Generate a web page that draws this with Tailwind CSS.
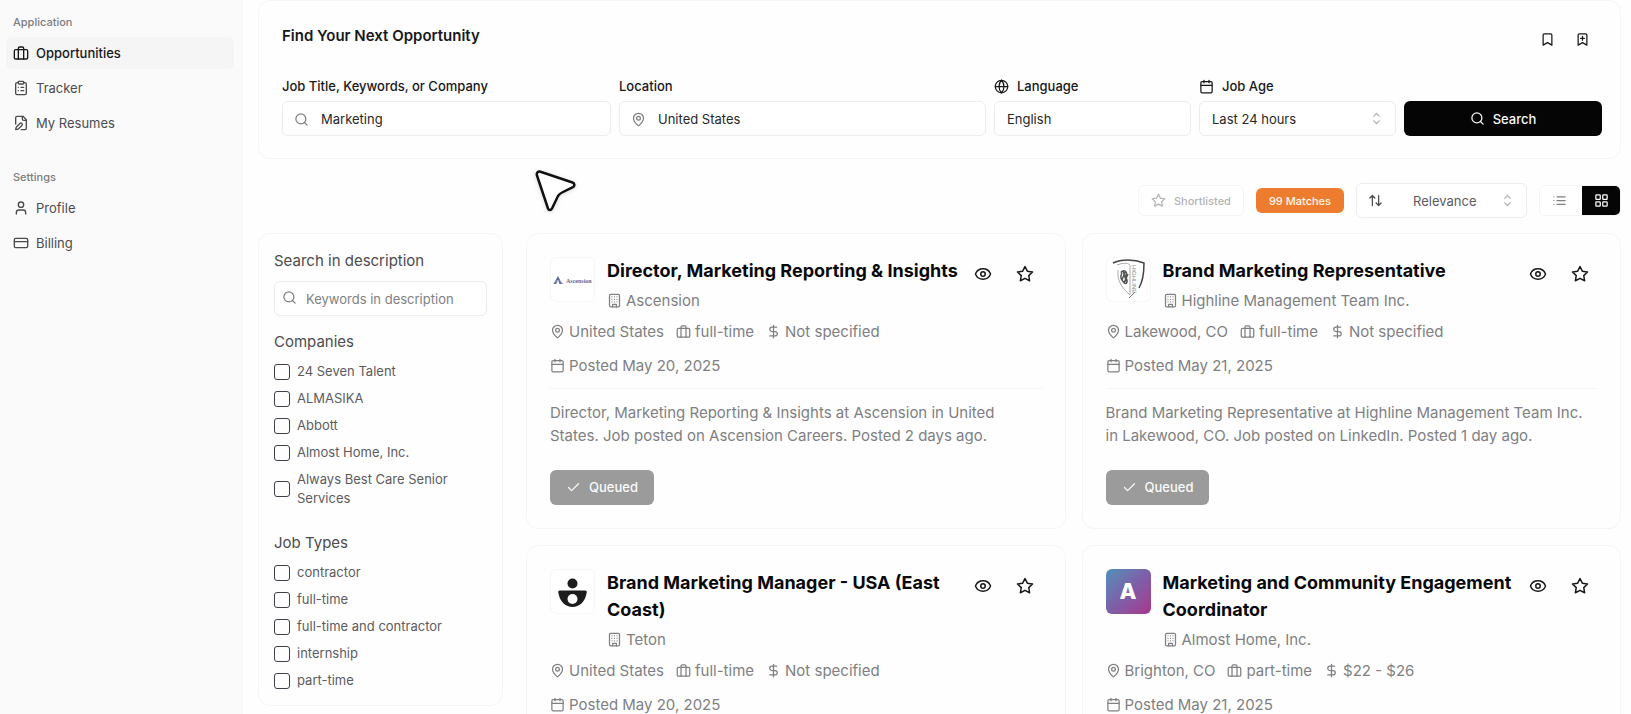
<!DOCTYPE html>
<html lang="en">
<head>
    <meta charset="UTF-8">
    <meta name="viewport" content="width=device-width, initial-scale=1.0">
    <title>Opportunities</title>
    <script src="https://cdn.jsdelivr.net/npm/@tailwindcss/browser@4"></script>
</head>
<body class="bg-[#fefefe] text-zinc-900 font-['Inter',sans-serif] text-[13px]/5">
    <!-- Icon sprite -->
    <svg class="hidden" xmlns="http://www.w3.org/2000/svg">
        <symbol id="i-briefcase" viewBox="0 0 24 24"><rect x="2" y="7" width="20" height="14" rx="2"/><path d="M16 21V5a2 2 0 0 0-2-2h-4a2 2 0 0 0-2 2v16"/></symbol>
        <symbol id="i-clipboard" viewBox="0 0 24 24"><rect x="8" y="2" width="8" height="4" rx="1"/><path d="M16 4h2a2 2 0 0 1 2 2v14a2 2 0 0 1-2 2H6a2 2 0 0 1-2-2V6a2 2 0 0 1 2-2h2M12 11h4M12 16h4M8 11h.01M8 16h.01"/></symbol>
        <symbol id="i-file-pen" viewBox="0 0 24 24"><path d="M12.5 22H18a2 2 0 0 0 2-2V7l-5-5H6a2 2 0 0 0-2 2v9.5"/><path d="M14 2v4a2 2 0 0 0 2 2h4"/><path d="M13.378 15.626a1 1 0 1 0-3.004-3.004l-5.01 5.012a2 2 0 0 0-.506.854l-.837 2.87a.5.5 0 0 0 .62.62l2.87-.837a2 2 0 0 0 .854-.506z"/></symbol>
        <symbol id="i-user" viewBox="0 0 24 24"><path d="M19 21v-2a4 4 0 0 0-4-4H9a4 4 0 0 0-4 4v2"/><circle cx="12" cy="7" r="4"/></symbol>
        <symbol id="i-card" viewBox="0 0 24 24"><rect x="2" y="5" width="20" height="14" rx="2"/><path d="M2 10h20"/></symbol>
        <symbol id="i-search" viewBox="0 0 24 24"><circle cx="11" cy="11" r="8"/><path d="m21 21-4.3-4.3"/></symbol>
        <symbol id="i-pin" viewBox="0 0 24 24"><path d="M20 10c0 4.993-5.539 10.193-7.399 11.799a1 1 0 0 1-1.202 0C9.539 20.193 4 14.993 4 10a8 8 0 0 1 16 0"/><circle cx="12" cy="10" r="3"/></symbol>
        <symbol id="i-globe" viewBox="0 0 24 24"><circle cx="12" cy="12" r="10"/><path d="M12 2a14.5 14.5 0 0 0 0 20 14.5 14.5 0 0 0 0-20M2 12h20"/></symbol>
        <symbol id="i-calendar" viewBox="0 0 24 24"><path d="M8 2v4M16 2v4M3 10h18"/><rect x="3" y="4" width="18" height="18" rx="2"/></symbol>
        <symbol id="i-chevrons" viewBox="0 0 24 24"><path d="m7 15 5 5 5-5M7 9l5-5 5 5"/></symbol>
        <symbol id="i-bookmark" viewBox="0 0 24 24"><path d="m19 21-7-4-7 4V5a2 2 0 0 1 2-2h10a2 2 0 0 1 2 2v16z"/></symbol>
        <symbol id="i-bookmark-plus" viewBox="0 0 24 24"><path d="m19 21-7-4-7 4V5a2 2 0 0 1 2-2h10a2 2 0 0 1 2 2v16zM12 7v6M15 10H9"/></symbol>
        <symbol id="i-star" viewBox="0 0 24 24"><path d="M12 2l3.09 6.26L22 9.27l-5 4.87 1.18 6.88L12 17.77l-6.18 3.25L7 14.14 2 9.27l6.91-1.01z"/></symbol>
        <symbol id="i-sort" viewBox="0 0 24 24"><path d="m21 16-4 4-4-4M17 20V4M3 8l4-4 4 4M7 4v16"/></symbol>
        <symbol id="i-list" viewBox="0 0 24 24"><path d="M8 6h13M8 12h13M8 18h13M3 6h.01M3 12h.01M3 18h.01"/></symbol>
        <symbol id="i-grid" viewBox="0 0 24 24"><rect x="3" y="3" width="7" height="7" rx="1"/><rect x="14" y="3" width="7" height="7" rx="1"/><rect x="14" y="14" width="7" height="7" rx="1"/><rect x="3" y="14" width="7" height="7" rx="1"/></symbol>
        <symbol id="i-building" viewBox="0 0 24 24"><rect x="4" y="2" width="16" height="20" rx="2"/><path d="M9 22v-4h6v4M8 6h.01M16 6h.01M12 6h.01M12 10h.01M12 14h.01M16 10h.01M16 14h.01M8 10h.01M8 14h.01"/></symbol>
        <symbol id="i-dollar" viewBox="0 0 24 24"><path d="M12 2v20M17 5H9.500a3.500 3.500 0 0 0 0 7h5a3.500 3.500 0 0 1 0 7H6"/></symbol>
        <symbol id="i-eye" viewBox="0 0 24 24"><path d="M2.062 12.348a1 1 0 0 1 0-.696 10.750 10.750 0 0 1 19.876 0 1 1 0 0 1 0 .696 10.750 10.750 0 0 1-19.876 0"/><circle cx="12" cy="12" r="3"/></symbol>
        <symbol id="i-check" viewBox="0 0 24 24"><path d="M20 6 9 17l-5-5"/></symbol>
    </svg>

    <div class="flex h-screen overflow-hidden">
        <!-- Sidebar -->
        <aside class="w-[243px] shrink-0 bg-[#fafafa] border-r border-[#f7f7f7] pl-1.5 pr-2 pt-[7px] text-[#4c4c4f]">
            <h2 class="h-[30px] px-[7px] flex items-center text-[11px] font-medium text-[#7d7d80]">Application</h2>
            <nav class="flex flex-col gap-[3px]">
                <a href="#" class="h-8 px-[7px] flex items-center gap-[7px] rounded-md bg-[#f5f5f5] font-medium text-zinc-900"><svg class="size-4 fill-none stroke-current stroke-2 [stroke-linecap:round] [stroke-linejoin:round]"><use href="#i-briefcase"/></svg>Opportunities</a>
                <a href="#" class="h-8 px-[7px] flex items-center gap-[7px] rounded-md"><svg class="size-4 fill-none stroke-current stroke-2 [stroke-linecap:round] [stroke-linejoin:round]"><use href="#i-clipboard"/></svg>Tracker</a>
                <a href="#" class="h-8 px-[7px] flex items-center gap-[7px] rounded-md"><svg class="size-4 fill-none stroke-current stroke-2 [stroke-linecap:round] [stroke-linejoin:round]"><use href="#i-file-pen"/></svg>My Resumes</a>
            </nav>
            <h2 class="mt-[23px] h-[30px] px-[7px] flex items-center text-[11px] font-medium text-[#7d7d80]">Settings</h2>
            <nav class="flex flex-col gap-[3px]">
                <a href="#" class="h-8 px-[7px] flex items-center gap-[7px] rounded-md"><svg class="size-4 fill-none stroke-current stroke-2 [stroke-linecap:round] [stroke-linejoin:round]"><use href="#i-user"/></svg>Profile</a>
                <a href="#" class="h-8 px-[7px] flex items-center gap-[7px] rounded-md"><svg class="size-4 fill-none stroke-current stroke-2 [stroke-linecap:round] [stroke-linejoin:round]"><use href="#i-card"/></svg>Billing</a>
            </nav>
        </aside>

        <main class="flex-1 min-w-0 pl-[15px] pr-2.5">
            <!-- Search form -->
            <form class="rounded-xl border border-[#f5f5f5] pl-[23px] pr-[18px] pt-[23px] pb-[22px]">
                <div class="flex items-center justify-between h-[30px] pr-3">
                    <h1 class="text-[15px] font-semibold mb-1.5">Find Your Next Opportunity</h1>
                    <div class="flex gap-5">
                        <button type="button" aria-label="Saved searches"><svg class="size-[15px] fill-none stroke-current stroke-2 [stroke-linecap:round] [stroke-linejoin:round]"><use href="#i-bookmark"/></svg></button>
                        <button type="button" aria-label="Save search"><svg class="size-[15px] fill-none stroke-current stroke-2 [stroke-linecap:round] [stroke-linejoin:round]"><use href="#i-bookmark-plus"/></svg></button>
                    </div>
                </div>
                <div class="mt-[22px] grid grid-cols-[329fr_367fr_197fr_197fr_198fr] gap-2 items-end">
                    <div>
                        <label for="keywords" class="flex items-center h-5 mb-[5px] font-medium">Job Title, Keywords, or Company</label>
                        <div class="relative">
                            <svg class="absolute left-3 top-[11px] size-[15px] text-[#808083] fill-none stroke-current stroke-2 [stroke-linecap:round] [stroke-linejoin:round]"><use href="#i-search"/></svg>
                            <input id="keywords" type="text" value="Marketing" class="w-full h-[35px] pl-[38px] pr-3 rounded-md border border-[#ececed] bg-white text-zinc-800">
                        </div>
                    </div>
                    <div>
                        <label for="location" class="flex items-center h-5 mb-[5px] font-medium">Location</label>
                        <div class="relative">
                            <svg class="absolute left-3 top-[11px] size-[15px] text-[#808083] fill-none stroke-current stroke-2 [stroke-linecap:round] [stroke-linejoin:round]"><use href="#i-pin"/></svg>
                            <input id="location" type="text" value="United States" class="w-full h-[35px] pl-[38px] pr-3 rounded-md border border-[#ececed] bg-white text-zinc-800">
                        </div>
                    </div>
                    <div>
                        <label for="language" class="flex items-center gap-2 h-5 mb-[5px] font-medium"><svg class="size-[15px] fill-none stroke-current stroke-2 [stroke-linecap:round] [stroke-linejoin:round]"><use href="#i-globe"/></svg>Language</label>
                        <input id="language" type="text" value="English" class="w-full h-[35px] px-3 rounded-md border border-[#ececed] bg-white text-zinc-800">
                    </div>
                    <div>
                        <label for="age" class="flex items-center gap-2 h-5 mb-[5px] font-medium"><svg class="size-[15px] fill-none stroke-current stroke-2 [stroke-linecap:round] [stroke-linejoin:round]"><use href="#i-calendar"/></svg>Job Age</label>
                        <div class="relative">
                            <select id="age" class="appearance-none w-full h-[35px] px-3 rounded-md border border-[#ececed] bg-white text-zinc-800"><option>Last 24 hours</option></select>
                            <svg class="absolute right-3 top-2.5 size-[15px] text-[#b4b4b6] fill-none stroke-current stroke-2 pointer-events-none"><use href="#i-chevrons"/></svg>
                        </div>
                    </div>
                    <button type="submit" class="h-[35px] rounded-md bg-[#050505] text-zinc-50 font-medium flex items-center justify-center gap-2"><svg class="size-[15px] fill-none stroke-current stroke-2 [stroke-linecap:round] [stroke-linejoin:round]"><use href="#i-search"/></svg>Search</button>
                </div>
            </form>

            <!-- Results toolbar -->
            <div class="mt-6 h-[35px] flex items-center justify-end">
                <button class="h-[31px] px-3 rounded-md border border-[#f4f4f5] bg-white text-[11px] font-medium text-[#b4b4b6] flex items-center gap-2"><svg class="size-[15px] fill-none stroke-current stroke-2 [stroke-linejoin:round]"><use href="#i-star"/></svg>Shortlisted</button>
                <span class="ml-3 h-[25px] px-[13px] rounded-md bg-[#ee7c2e] text-[11px] font-medium text-orange-50 flex items-center">99 Matches</span>
                <div class="ml-3 relative">
                    <svg class="absolute left-3 top-2.5 size-[15px] text-[#4c4c4f] fill-none stroke-current stroke-2 [stroke-linecap:round] [stroke-linejoin:round] pointer-events-none"><use href="#i-sort"/></svg>
                    <select aria-label="Sort by" class="appearance-none w-[171px] h-[35px] pl-14 rounded-md border border-[#ececed] bg-white text-[#5c5c5f]"><option>Relevance</option></select>
                    <svg class="absolute right-3 top-2.5 size-[15px] text-[#b4b4b6] fill-none stroke-current stroke-2 pointer-events-none"><use href="#i-chevrons"/></svg>
                </div>
                <div class="ml-3 h-[31px] flex rounded-md border border-[#f4f4f5] bg-white overflow-hidden">
                    <button aria-label="List view" class="w-[42px] flex items-center justify-center pr-1 text-[#808083]"><svg class="size-[15px] fill-none stroke-current stroke-2 [stroke-linecap:round] [stroke-linejoin:round]"><use href="#i-list"/></svg></button>
                    <button aria-label="Grid view" class="w-[38px] flex items-center justify-center bg-[#050505] text-white"><svg class="size-[15px] fill-none stroke-current stroke-2 [stroke-linecap:round] [stroke-linejoin:round]"><use href="#i-grid"/></svg></button>
                </div>
            </div>

            <div class="mt-[15px] flex items-start gap-[23px]">
                <!-- Filters -->
                <aside class="w-[245px] shrink-0 rounded-xl border border-[#f5f5f5] p-[15px] text-[#5c5c5f]">
                    <label for="desc" class="block text-[15px]/6 text-[#4c4c4f]">Search in description</label>
                    <div class="relative mt-2">
                        <svg class="absolute left-2 top-[9px] size-[15px] text-[#808083] fill-none stroke-current stroke-2 [stroke-linecap:round] [stroke-linejoin:round]"><use href="#i-search"/></svg>
                        <input id="desc" type="text" placeholder="Keywords in description" class="block w-full h-[35px] pl-[31px] pr-3 rounded-md border border-[#ececed] bg-white placeholder:text-[#808083]">
                    </div>
                    <fieldset class="mt-3.5">
                        <legend class="text-[15px]/6 text-[#4c4c4f]">Companies</legend>
                        <div class="mt-2 flex flex-col gap-2 leading-[19px]">
                            <label class="flex items-center gap-[7px]"><input type="checkbox" class="appearance-none size-4 shrink-0 rounded-[3px] border border-zinc-700">24 Seven Talent</label>
                            <label class="flex items-center gap-[7px]"><input type="checkbox" class="appearance-none size-4 shrink-0 rounded-[3px] border border-zinc-700">ALMASIKA</label>
                            <label class="flex items-center gap-[7px]"><input type="checkbox" class="appearance-none size-4 shrink-0 rounded-[3px] border border-zinc-700">Abbott</label>
                            <label class="flex items-center gap-[7px]"><input type="checkbox" class="appearance-none size-4 shrink-0 rounded-[3px] border border-zinc-700">Almost Home, Inc.</label>
                            <label class="flex items-center gap-[7px]"><input type="checkbox" class="appearance-none size-4 shrink-0 rounded-[3px] border border-zinc-700">Always Best Care Senior Services</label>
                        </div>
                    </fieldset>
                    <fieldset class="mt-[23px]">
                        <legend class="text-[15px]/6 text-[#4c4c4f]">Job Types</legend>
                        <div class="mt-2 flex flex-col gap-2 leading-[19px]">
                            <label class="flex items-center gap-[7px]"><input type="checkbox" class="appearance-none size-4 shrink-0 rounded-[3px] border border-zinc-700">contractor</label>
                            <label class="flex items-center gap-[7px]"><input type="checkbox" class="appearance-none size-4 shrink-0 rounded-[3px] border border-zinc-700">full-time</label>
                            <label class="flex items-center gap-[7px]"><input type="checkbox" class="appearance-none size-4 shrink-0 rounded-[3px] border border-zinc-700">full-time and contractor</label>
                            <label class="flex items-center gap-[7px]"><input type="checkbox" class="appearance-none size-4 shrink-0 rounded-[3px] border border-zinc-700">internship</label>
                            <label class="flex items-center gap-[7px]"><input type="checkbox" class="appearance-none size-4 shrink-0 rounded-[3px] border border-zinc-700">part-time</label>
                        </div>
                    </fieldset>
                </aside>

                <!-- Job cards -->
                <div class="flex-1 min-w-0 grid grid-cols-2 gap-4 text-[15px]/[23px] text-[#808083]">
                    <article class="rounded-xl border border-[#f5f5f5] p-[23px]">
                        <div class="flex">
                            <div class="size-[45px] shrink-0 rounded-md border border-[#f7f7f7] bg-white">
                                <svg viewBox="0 0 43 43" class="size-full"><path d="M7 18 11 26H8.500L7 22 5 26H2.500z" fill="#5d6799"/><path d="M3 25c3-4 6-3 9 1" fill="none" stroke="#9aa6cc"/><text x="15" y="25" font-size="6" font-weight="700" font-family="Liberation Serif, serif" fill="#5d6799">Ascension</text></svg>
                            </div>
                            <div class="ml-3 flex-1 min-w-0">
                                <h3 class="text-[18px]/[27px] font-bold text-zinc-950">Director, Marketing Reporting &amp; Insights</h3>
                                <p class="mt-[5px] flex items-center gap-1"><svg class="size-[15px] fill-none stroke-current stroke-2 [stroke-linecap:round] [stroke-linejoin:round]"><use href="#i-building"/></svg>Ascension</p>
                            </div>
                            <div class="flex gap-6 pt-2 pr-2 ml-1 h-fit text-zinc-900">
                                <button aria-label="View job"><svg class="size-[18px] fill-none stroke-current stroke-2 [stroke-linecap:round] [stroke-linejoin:round]"><use href="#i-eye"/></svg></button>
                                <button aria-label="Shortlist job"><svg class="size-[18px] fill-none stroke-current stroke-2 [stroke-linejoin:round]"><use href="#i-star"/></svg></button>
                            </div>
                        </div>
                        <div class="mt-2 flex flex-wrap gap-x-3 gap-y-[11px]">
                            <span class="flex items-center gap-1"><svg class="size-[15px] fill-none stroke-current stroke-2 [stroke-linecap:round] [stroke-linejoin:round]"><use href="#i-pin"/></svg>United States</span>
                            <span class="flex items-center gap-1"><svg class="size-[15px] fill-none stroke-current stroke-2 [stroke-linecap:round] [stroke-linejoin:round]"><use href="#i-briefcase"/></svg>full-time</span>
                            <span class="flex items-center gap-1"><svg class="size-[15px] fill-none stroke-current stroke-2 [stroke-linecap:round] [stroke-linejoin:round]"><use href="#i-dollar"/></svg>Not specified</span>
                            <span class="w-full flex items-center gap-1"><svg class="size-[15px] fill-none stroke-current stroke-2 [stroke-linecap:round] [stroke-linejoin:round]"><use href="#i-calendar"/></svg>Posted May 20, 2025</span>
                        </div>
                        <p class="mt-[11px] border-t border-[#f5f5f5] pt-3">Director, Marketing Reporting &amp; Insights at Ascension in United States. Job posted on Ascension Careers. Posted 2 days ago.</p>
                        <button disabled class="mt-[23px] h-[35px] px-4 rounded-md bg-[#9b9b9b] text-[13px] font-medium text-zinc-50 flex items-center gap-2"><svg class="size-[15px] fill-none stroke-current stroke-2 [stroke-linecap:round] [stroke-linejoin:round]"><use href="#i-check"/></svg>Queued</button>
                    </article>

                    <article class="rounded-xl border border-[#f5f5f5] p-[23px]">
                        <div class="flex">
                            <div class="size-[45px] shrink-0 rounded-md border border-[#f7f7f7] bg-white">
                                <svg viewBox="0 0 43 43" class="size-full" fill="none"><path d="M6 5C14 1 27 1 37 5c0 12-1 18-5 25" stroke="#444" stroke-width="1.500"/><path d="M10 7c10-4 14 0 13 1v29c-8-7-13-14-12-25" stroke="#aaa"/><path d="M28 34l-6 6" stroke="#777"/><path d="M14 14c3-3 7 0 5 3s2 3 1 7-5-1-6-4 2-4 0-6M16 13l4 12M18 14l-3 8M21 16l-4 9" stroke="#555" stroke-width="1.500"/><text transform="translate(25 7) rotate(90)" font-size="6" font-family="Liberation Sans, sans-serif" fill="#888">HIGHLINE</text></svg>
                            </div>
                            <div class="ml-3 flex-1 min-w-0">
                                <h3 class="text-[18px]/[27px] font-bold text-zinc-950">Brand Marketing Representative</h3>
                                <p class="mt-[5px] flex items-center gap-1"><svg class="size-[15px] fill-none stroke-current stroke-2 [stroke-linecap:round] [stroke-linejoin:round]"><use href="#i-building"/></svg>Highline Management Team Inc.</p>
                            </div>
                            <div class="flex gap-6 pt-2 pr-2 ml-1 h-fit text-zinc-900">
                                <button aria-label="View job"><svg class="size-[18px] fill-none stroke-current stroke-2 [stroke-linecap:round] [stroke-linejoin:round]"><use href="#i-eye"/></svg></button>
                                <button aria-label="Shortlist job"><svg class="size-[18px] fill-none stroke-current stroke-2 [stroke-linejoin:round]"><use href="#i-star"/></svg></button>
                            </div>
                        </div>
                        <div class="mt-2 flex flex-wrap gap-x-3 gap-y-[11px]">
                            <span class="flex items-center gap-1"><svg class="size-[15px] fill-none stroke-current stroke-2 [stroke-linecap:round] [stroke-linejoin:round]"><use href="#i-pin"/></svg>Lakewood, CO</span>
                            <span class="flex items-center gap-1"><svg class="size-[15px] fill-none stroke-current stroke-2 [stroke-linecap:round] [stroke-linejoin:round]"><use href="#i-briefcase"/></svg>full-time</span>
                            <span class="flex items-center gap-1"><svg class="size-[15px] fill-none stroke-current stroke-2 [stroke-linecap:round] [stroke-linejoin:round]"><use href="#i-dollar"/></svg>Not specified</span>
                            <span class="w-full flex items-center gap-1"><svg class="size-[15px] fill-none stroke-current stroke-2 [stroke-linecap:round] [stroke-linejoin:round]"><use href="#i-calendar"/></svg>Posted May 21, 2025</span>
                        </div>
                        <p class="mt-[11px] border-t border-[#f5f5f5] pt-3">Brand Marketing Representative at Highline Management Team Inc. in Lakewood, CO. Job posted on LinkedIn. Posted 1 day ago.</p>
                        <button disabled class="mt-[23px] h-[35px] px-4 rounded-md bg-[#9b9b9b] text-[13px] font-medium text-zinc-50 flex items-center gap-2"><svg class="size-[15px] fill-none stroke-current stroke-2 [stroke-linecap:round] [stroke-linejoin:round]"><use href="#i-check"/></svg>Queued</button>
                    </article>

                    <article class="rounded-xl border border-[#f5f5f5] p-[23px]">
                        <div class="flex">
                            <div class="size-[45px] shrink-0 rounded-md border border-[#f7f7f7] bg-white">
                                <svg viewBox="0 0 43 43" class="size-full" fill="#1c1c1c"><circle cx="21.500" cy="13.500" r="5"/><path d="M9 20.500h25c2 0 2 1 1.500 3C34 32 28 37 21.500 37S9 32 7.500 23.500c-.5-2-.5-3 1.500-3z"/><circle cx="21.500" cy="29" r="5" fill="#fff"/></svg>
                            </div>
                            <div class="ml-3 flex-1 min-w-0">
                                <h3 class="text-[18px]/[27px] font-bold text-zinc-950">Brand Marketing Manager - USA (East Coast)</h3>
                                <p class="mt-[5px] flex items-center gap-1"><svg class="size-[15px] fill-none stroke-current stroke-2 [stroke-linecap:round] [stroke-linejoin:round]"><use href="#i-building"/></svg>Teton</p>
                            </div>
                            <div class="flex gap-6 pt-2 pr-2 ml-1 h-fit text-zinc-900">
                                <button aria-label="View job"><svg class="size-[18px] fill-none stroke-current stroke-2 [stroke-linecap:round] [stroke-linejoin:round]"><use href="#i-eye"/></svg></button>
                                <button aria-label="Shortlist job"><svg class="size-[18px] fill-none stroke-current stroke-2 [stroke-linejoin:round]"><use href="#i-star"/></svg></button>
                            </div>
                        </div>
                        <div class="mt-2 flex flex-wrap gap-x-3 gap-y-[11px]">
                            <span class="flex items-center gap-1"><svg class="size-[15px] fill-none stroke-current stroke-2 [stroke-linecap:round] [stroke-linejoin:round]"><use href="#i-pin"/></svg>United States</span>
                            <span class="flex items-center gap-1"><svg class="size-[15px] fill-none stroke-current stroke-2 [stroke-linecap:round] [stroke-linejoin:round]"><use href="#i-briefcase"/></svg>full-time</span>
                            <span class="flex items-center gap-1"><svg class="size-[15px] fill-none stroke-current stroke-2 [stroke-linecap:round] [stroke-linejoin:round]"><use href="#i-dollar"/></svg>Not specified</span>
                            <span class="w-full flex items-center gap-1"><svg class="size-[15px] fill-none stroke-current stroke-2 [stroke-linecap:round] [stroke-linejoin:round]"><use href="#i-calendar"/></svg>Posted May 20, 2025</span>
                        </div>
                    </article>

                    <article class="rounded-xl border border-[#f5f5f5] p-[23px]">
                        <div class="flex">
                            <div class="size-[45px] shrink-0 rounded-md bg-linear-to-br from-[#4a90b8] via-[#7b5fa8] to-[#a8328c] text-white text-[22px] font-extrabold flex items-center justify-center">A</div>
                            <div class="ml-3 flex-1 min-w-0">
                                <h3 class="text-[18px]/[27px] font-bold text-zinc-950">Marketing and Community Engagement Coordinator</h3>
                                <p class="mt-[5px] flex items-center gap-1"><svg class="size-[15px] fill-none stroke-current stroke-2 [stroke-linecap:round] [stroke-linejoin:round]"><use href="#i-building"/></svg>Almost Home, Inc.</p>
                            </div>
                            <div class="flex gap-6 pt-2 pr-2 ml-1 h-fit text-zinc-900">
                                <button aria-label="View job"><svg class="size-[18px] fill-none stroke-current stroke-2 [stroke-linecap:round] [stroke-linejoin:round]"><use href="#i-eye"/></svg></button>
                                <button aria-label="Shortlist job"><svg class="size-[18px] fill-none stroke-current stroke-2 [stroke-linejoin:round]"><use href="#i-star"/></svg></button>
                            </div>
                        </div>
                        <div class="mt-2 flex flex-wrap gap-x-3 gap-y-[11px]">
                            <span class="flex items-center gap-1"><svg class="size-[15px] fill-none stroke-current stroke-2 [stroke-linecap:round] [stroke-linejoin:round]"><use href="#i-pin"/></svg>Brighton, CO</span>
                            <span class="flex items-center gap-1"><svg class="size-[15px] fill-none stroke-current stroke-2 [stroke-linecap:round] [stroke-linejoin:round]"><use href="#i-briefcase"/></svg>part-time</span>
                            <span class="flex items-center gap-1"><svg class="size-[15px] fill-none stroke-current stroke-2 [stroke-linecap:round] [stroke-linejoin:round]"><use href="#i-dollar"/></svg>$22 - $26</span>
                            <span class="w-full flex items-center gap-1"><svg class="size-[15px] fill-none stroke-current stroke-2 [stroke-linecap:round] [stroke-linejoin:round]"><use href="#i-calendar"/></svg>Posted May 21, 2025</span>
                        </div>
                    </article>
                </div>
            </div>
        </main>
    </div>

    <!-- Mouse pointer -->
    <svg class="absolute left-[534px] top-[169px] w-[44px] h-[44px] pointer-events-none drop-shadow-sm" viewBox="0 0 44 44"><path d="M3 6.500c-.8-2.500 1-4.500 3.500-3.800L38.500 13.500c2.300.8 2.500 3.500.4 4.600L28 23.500c-2 1-3 2-4 3.500L18 39.500c-1 2-3.200 2-4 0z" fill="#fff" stroke="#111" stroke-width="2.500" stroke-linejoin="round"/></svg>
</body>
</html>
